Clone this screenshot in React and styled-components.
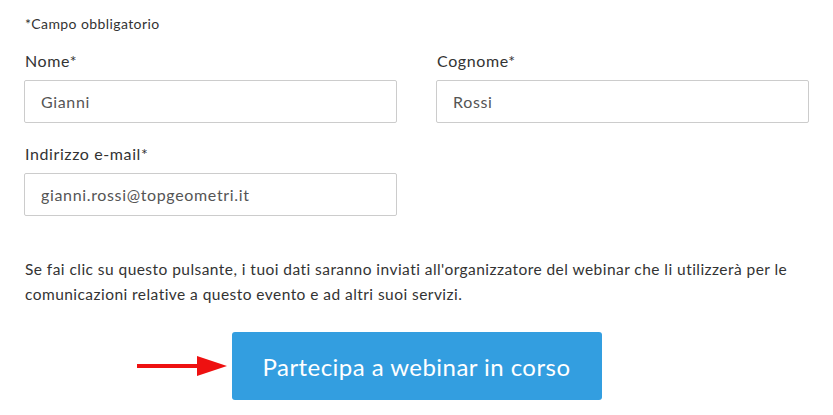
import styled, { createGlobalStyle } from "styled-components";

const GlobalStyle = createGlobalStyle`
  body {
    margin: 0;
    background: #fff;
    font-family: Lato, "Noto Sans", sans-serif;
    color: #333;
  }
`;

const Form = styled.form`
  width: 785px;
  padding: 15px 0 0 24px;
`;

const Note = styled.div`
  font-size: 14px;
  line-height: 18px;
  letter-spacing: 0.4px;
  padding-left: 1px;
  margin-bottom: 18px;
`;

const Row = styled.div`
  display: grid;
  grid-template-columns: ${(p) => (p.$single ? "373px" : "373px 373px")};
  column-gap: 39px;
  margin-bottom: ${(p) => p.$gap || 0}px;
`;

const Field = styled.div`
  display: flex;
  flex-direction: column;
`;

const Label = styled.label`
  font-size: 16px;
  line-height: 20px;
  letter-spacing: 0.6px;
  padding-left: 1px;
  margin-bottom: 9px;
  color: #333;
`;

const Input = styled.input`
  box-sizing: border-box;
  height: 43px;
  border: 1px solid #ccc;
  border-radius: 2px;
  padding: 0 16px;
  font-family: inherit;
  font-size: 16px;
  letter-spacing: 0.65px;
  color: #555;
  background: #fff;
  outline: none;
`;

const Disclaimer = styled.p`
  margin: 0 0 24px 0;
  padding-left: 1px;
  font-size: 15.5px;
  line-height: 25px;
  letter-spacing: 0.45px;
  color: #333;
`;

const ButtonRow = styled.div`
  display: flex;
  justify-content: center;
  width: 833px;
  margin-left: -24px;
  padding-top: 1px;
`;

const ButtonWrap = styled.div`
  position: relative;
`;

const Arrow = styled.svg`
  position: absolute;
  right: 100%;
  top: 50%;
  margin-right: 5px;
  transform: translateY(-50%);
`;

const Button = styled.button`
  width: 370px;
  height: 68px;
  border: none;
  border-radius: 3px;
  background: #339ee0;
  color: #fff;
  font-family: inherit;
  font-size: 24px;
  letter-spacing: 0.45px;
  cursor: pointer;
`;

export default function App() {
  return (
    <>
      <GlobalStyle />
      <Form onSubmit={(e) => e.preventDefault()}>
        <Note>*Campo obbligatorio</Note>
        <Row $gap={21}>
          <Field>
            <Label>Nome*</Label>
            <Input defaultValue="Gianni" />
          </Field>
          <Field>
            <Label>Cognome*</Label>
            <Input defaultValue="Rossi" />
          </Field>
        </Row>
        <Row $single $gap={41}>
          <Field>
            <Label>Indirizzo e-mail*</Label>
            <Input defaultValue="gianni.rossi@topgeometri.it" />
          </Field>
        </Row>
        <Disclaimer>
          Se fai clic su questo pulsante, i tuoi dati saranno inviati all'organizzatore del webinar che li utilizzerà per le
          comunicazioni relative a questo evento e ad altri suoi servizi.
        </Disclaimer>
        <ButtonRow>
          <ButtonWrap>
            <Arrow width="90" height="20" viewBox="0 0 90 20">
              <rect x="0" y="8" width="62" height="4" fill="#ee1111" />
              <polygon points="60,0 90,10 60,20" fill="#ee1111" />
            </Arrow>
            <Button type="submit">Partecipa a webinar in corso</Button>
          </ButtonWrap>
        </ButtonRow>
      </Form>
    </>
  );
}
